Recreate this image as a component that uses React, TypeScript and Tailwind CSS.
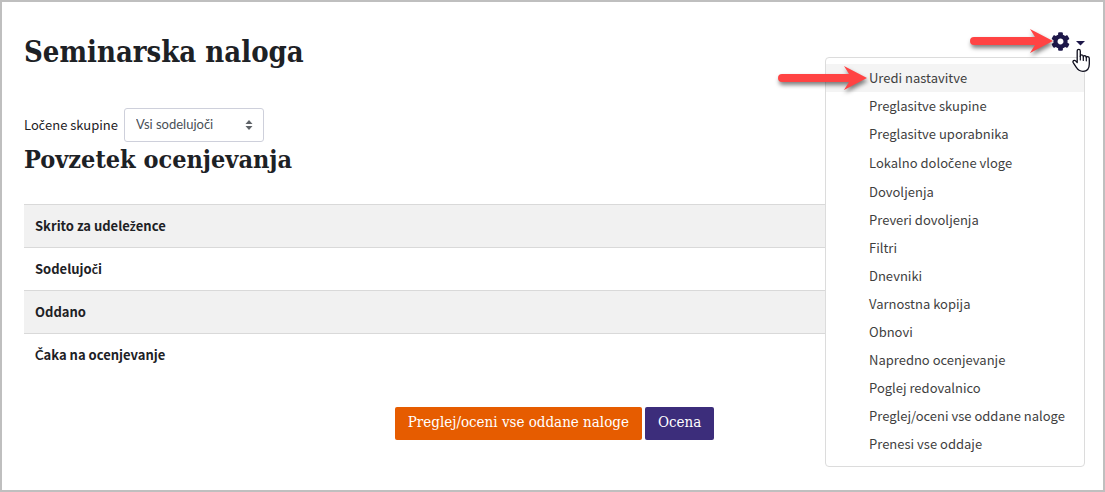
import { FaCog } from 'react-icons/fa';

const menuItems = [
  'Uredi nastavitve',
  'Preglasitve skupine',
  'Preglasitve uporabnika',
  'Lokalno določene vloge',
  'Dovoljenja',
  'Preveri dovoljenja',
  'Filtri',
  'Dnevniki',
  'Varnostna kopija',
  'Obnovi',
  'Napredno ocenjevanje',
  'Poglej redovalnico',
  'Preglej/oceni vse oddane naloge',
  'Prenesi vse oddaje',
];

const summaryRows = ['Skrito za udeležence', 'Sodelujoči', 'Oddano', 'Čaka na ocenjevanje'];

function Label({ text }: { text: string }) {
  return (
    <span>
      {text.split(/([čžČŽ])/).map((part, i) =>
        i % 2 ? (
          <span key={i} className="font-['Lato',sans-serif]">{part}</span>
        ) : (
          part
        )
      )}
    </span>
  );
}

function Arrow({ length }: { length: number }) {
  return (
    <svg width={length} height="34" viewBox={`0 0 ${length} 34`} className="drop-shadow-[1px_3px_2px_rgba(0,0,0,0.5)]" aria-hidden="true">
      <path
        d={`M4 13H${length - 18}L${length - 23} 5L${length} 17L${length - 23} 29L${length - 18} 21H4A4 4 0 0 1 4 13Z`}
        fill="#ff4343"
      />
    </svg>
  );
}

function HandCursor() {
  return (
    <svg width="19" height="25" viewBox="0 0 19 25" aria-hidden="true">
      <path
        d="M5.2 14.5V3C5.2 .7 8.3 .7 8.3 3V8.5C8.3 6.3 11.3 6.5 11.3 8.8C11.4 7.2 14.3 7.3 14.3 9.6C14.5 8.2 17.3 8.3 17.3 10.6V16C17.3 21 14.6 23.3 11 23.3C7.5 23.3 5.7 21.8 4.3 19.3L1.2 14.6C.3 12.9 2.4 11.7 3.6 12.9Z"
        fill="#fff"
        stroke="#0d0d1c"
        strokeWidth="1.3"
        strokeLinejoin="round"
      />
      <path d="M8.3 8V12M11.3 8.8V12.5M14.3 9.6V12.8" stroke="#0d0d1c" strokeWidth="1.2" strokeLinecap="round" />
    </svg>
  );
}

function ActionMenu() {
  return (
    <div className="relative">
      <button type="button" aria-label="Nastavitve" aria-expanded="true" className="flex items-center gap-1.5 text-[#1d1749]">
        <FaCog className="size-[19px]" />
        <svg width="9" height="5" viewBox="0 0 9 5" className="mt-1" aria-hidden="true">
          <path d="M0 0H9L4.5 4.5Z" fill="currentColor" />
        </svg>
      </button>

      {/* Dropdown */}
      <div className="absolute right-0 top-full mt-1.5">
        <ul className="flex min-h-[410px] w-[260px] flex-col rounded-sm border border-[#dcdcdc] bg-white pt-1.5 pb-2">
          {menuItems.map((item, i) => (
            <li key={item} className="flex flex-1">
              <a
                href="#"
                className={`flex flex-1 items-center whitespace-nowrap pl-[43px] text-[13px] text-[#3f3f3f] ${i === 0 ? 'bg-[#f4f4f4]' : ''}`}
              >
                <Label text={item} />
              </a>
            </li>
          ))}
        </ul>
        <div className="pointer-events-none absolute top-1 right-[218px]">
          <Arrow length={89} />
        </div>
      </div>

      <div className="pointer-events-none absolute -top-2 right-8">
        <Arrow length={83} />
      </div>
      <div className="pointer-events-none absolute top-4 -right-1.5">
        <HandCursor />
      </div>
    </div>
  );
}

export default function App() {
  return (
    <main className="min-h-screen border-2 border-[#bfbfbf] bg-white pt-[30px] pr-[18px] pl-[22px] font-['Noto_Sans_CJK_SC','Noto_Sans',sans-serif] text-[13px] text-[#1d2125]">
      <header className="flex items-start justify-between">
        <h1 className="font-['DejaVu_Serif_Condensed','DejaVu_Serif',serif] text-[29px] leading-[40px] font-bold">
          Seminarska naloga
        </h1>
        <ActionMenu />
      </header>

      <div className="mt-9 flex items-center gap-1.5">
        <label htmlFor="group">
          <Label text="Ločene skupine" />
        </label>
        <div className="relative">
          <select
            id="group"
            className="h-[34px] w-[140px] appearance-none rounded-[3px] border border-[#ced0db] bg-white pl-[11px] font-['Lato',sans-serif] text-[13px] text-[#495057]"
          >
            <option>Vsi sodelujoči</option>
          </select>
          <svg width="8" height="10" viewBox="0 0 8 10" className="pointer-events-none absolute top-3 right-[11px]" aria-hidden="true">
            <path d="M.5 4H7.5L4 0ZM.5 6H7.5L4 10Z" fill="#5f6368" />
          </svg>
        </div>
      </div>

      <h2 className="font-['DejaVu_Serif_Condensed','DejaVu_Serif',serif] text-[25px] leading-[36px] font-bold">
        Povzetek ocenjevanja
      </h2>

      <table className="mt-[26px] w-full text-left">
        <tbody>
          {summaryRows.map((row) => (
            <tr key={row} className="border-t border-[#d9d9d9] odd:bg-[#f1f1f1]">
              <th scope="row" className="h-[43px] px-[11px] font-bold">
                <Label text={row} />
              </th>
              <td />
            </tr>
          ))}
        </tbody>
      </table>

      <div className="mt-[30px] flex justify-center gap-[3px] font-['DejaVu_Serif_Condensed','DejaVu_Serif',serif] text-[15px] leading-[30px] text-white">
        <a href="#" className="h-[33px] rounded-xs bg-[#e65c00] px-[13px]">
          Preglej/oceni vse oddane naloge
        </a>
        <a href="#" className="h-[33px] rounded-xs bg-[#3c2d7b] px-[13px]">
          Ocena
        </a>
      </div>
    </main>
  );
}
